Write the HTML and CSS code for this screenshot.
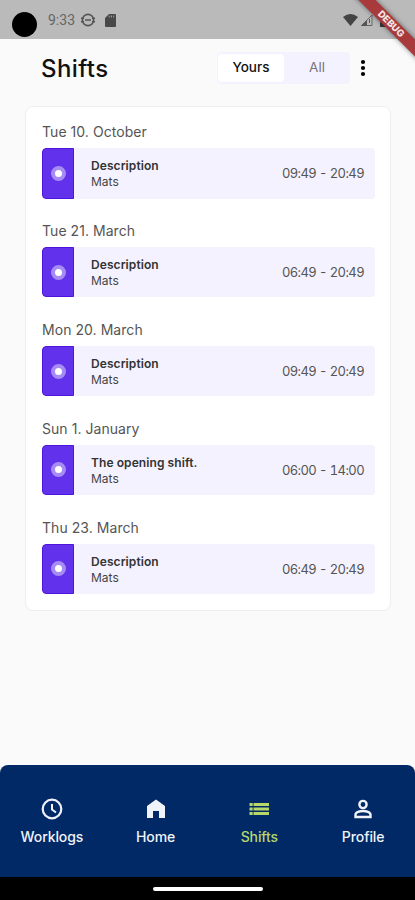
FILE: index.html
```html
<!DOCTYPE html>
<html lang="en">
<head>
<meta charset="utf-8">
<title>Shifts</title>
<link rel="stylesheet" href="styles.css">
</head>
<body>
<div class="phone">
  <div class="status">
    <span class="camera"></span>
    <span class="clock">9:33</span>
    <svg class="face" viewBox="0 0 14 14"><circle cx="7" cy="7" r="5.600" fill="none" stroke="#555" stroke-width="1.600"/><path d="M0 4.500h3v1.500H0zM0 8h3v1.500H0zM11 4.500h3v1.500h-3zM11 8h3v1.500h-3zM4 6.300h6v1.500H4z" fill="#555"/></svg>
    <svg class="sd" viewBox="0 0 11 13"><path d="M4 0h6a1 1 0 0 1 1 1v11a1 1 0 0 1-1 1H1a1 1 0 0 1-1-1V4z" fill="#484848"/><path d="M4.300 1.500v2M6.500 1.500v2M8.700 1.500v2" stroke="#999" stroke-width="1"/></svg>
    <span class="grow"></span>
    <svg class="wifi" viewBox="0 0 15 12"><path d="M0 3Q7.500-3 15 3L7.500 12z" fill="#444"/></svg>
    <svg class="signal" viewBox="0 0 13 12"><path d="M12 1v10.500H1.500z" fill="none" stroke="#666"/><path d="M7 6v6H1z" fill="#555"/><path d="M9.500 5v4" stroke="#555"/></svg>
    <svg class="battery" viewBox="0 0 8 13"><path d="M2.500 0h3v1.500H8V13H0V1.500h2.500z" fill="#3c3c3c"/></svg>
  </div>
  <div class="ribbon">DEBUG</div>

  <header class="header">
    <h1>Shifts</h1>
    <div class="toggle"><span class="on">Yours</span><span class="off">All</span></div>
    <svg class="more" viewBox="0 0 6 18"><circle cx="3" cy="3" r="2.100"/><circle cx="3" cy="9" r="2.100"/><circle cx="3" cy="15" r="2.100"/></svg>
  </header>

  <main class="card">
    <section><h2>Tue 10. October</h2><div class="row"><div class="mark"><i></i></div><div class="info"><b>Description</b><span>Mats</span></div><time>09:49 - 20:49</time></div></section>
    <section><h2>Tue 21. March</h2><div class="row"><div class="mark"><i></i></div><div class="info"><b>Description</b><span>Mats</span></div><time>06:49 - 20:49</time></div></section>
    <section><h2>Mon 20. March</h2><div class="row"><div class="mark"><i></i></div><div class="info"><b>Description</b><span>Mats</span></div><time>09:49 - 20:49</time></div></section>
    <section><h2>Sun 1. January</h2><div class="row"><div class="mark"><i></i></div><div class="info"><b>The opening shift.</b><span>Mats</span></div><time>06:00 - 14:00</time></div></section>
    <section><h2>Thu 23. March</h2><div class="row"><div class="mark"><i></i></div><div class="info"><b>Description</b><span>Mats</span></div><time>06:49 - 20:49</time></div></section>
  </main>

  <nav class="nav">
    <a><svg viewBox="0 0 24 24"><circle cx="12" cy="12" r="9.300" fill="none" stroke="currentColor" stroke-width="2.200"/><path d="M12 7v5.500l4 3" fill="none" stroke="currentColor" stroke-width="2"/></svg><span>Worklogs</span></a>
    <a><svg viewBox="0 0 24 24"><path d="M12 2.500l9 6.500V21h-6v-7H9v7H3V9z" fill="currentColor"/></svg><span>Home</span></a>
    <a class="active"><svg viewBox="0 0 24 24"><path d="M2.500 6h3.200v3H2.500zM6.500 6h15.500v3H6.500zM2.500 10.500h3.200v3H2.500zM6.500 10.500h15.500v3H6.500zM2.500 15h3.200v3H2.500zM6.500 15h15.500v3H6.500z" fill="currentColor"/></svg><span>Shifts</span></a>
    <a><svg viewBox="0 0 24 24"><circle cx="12" cy="7.500" r="3.600" fill="none" stroke="currentColor" stroke-width="2.400"/><path d="M4.500 20v-2.300c0-2.400 4.300-3.700 7.500-3.700s7.500 1.300 7.500 3.700V20z" fill="none" stroke="currentColor" stroke-width="2.400"/></svg><span>Profile</span></a>
  </nav>
  <div class="gesture"><span></span></div>
</div>
</body>
</html>
```
FILE: styles.css
```css
* { box-sizing: border-box; }
body { margin: 0; font-family: Inter, "Liberation Sans", sans-serif; background: #fafafa; }
.phone { position: relative; width: 415px; height: 900px; overflow: hidden; display: flex; flex-direction: column; background: #fafafa; }

.status { flex: none; height: 39px; background: #bababa; display: flex; align-items: center; padding: 1px 27px 0 12px; }
.camera { width: 25px; height: 25px; border-radius: 50%; background: #000; margin-top: 9px; }
.clock { width: 27px; margin-left: 11px; font: 14px Roboto, sans-serif; color: #666; }
.face { width: 14px; height: 14px; margin-left: 6px; }
.sd { width: 11px; height: 13px; margin-left: 10px; }
.grow { flex: 1; }
.wifi { width: 15px; height: 12px; }
.signal { width: 13px; height: 12px; margin-left: 2px; }
.battery { width: 8px; height: 13px; margin-left: 7px; }
.ribbon { position: absolute; left: 341px; top: 18px; width: 100px; height: 12px; line-height: 12px; transform: rotate(45deg); background: #a93a3c; box-shadow: 0 0 5px rgba(0, 0, 0, .5); color: #f5e6e6; text-align: center; font-size: 9.5px; font-weight: 800; }

.header { flex: none; height: 67px; display: flex; align-items: center; padding: 0 49px 9px 41px; }
.header h1 { flex: 1; margin: 0; padding-top: 2px; font-size: 24px; font-weight: 450; line-height: 30px; letter-spacing: .4px; color: #111; }
.toggle { width: 133px; height: 32px; padding: 2px 0 2px 1px; border-radius: 5px; background: #f4f2ff; display: flex; font-size: 13.500px; line-height: 27px; text-align: center; }
.toggle span { flex: 1; }
.toggle .on { background: #fff; border-radius: 4px; font-weight: 500; color: #111; }
.toggle .off { color: #77757e; }
.more { width: 6px; height: 18px; margin-left: 10px; fill: #000; }

.card { flex: none; width: 366px; height: 505px; margin-left: 25px; padding: 15px 15px 0 16px; border: 1px solid #eee; border-radius: 8px; background: #fff; display: flex; flex-direction: column; }
.card section { height: 98.9px; flex: none; }
.card h2 { margin: 0 0 7px; font-size: 14px; line-height: 19px; font-weight: 400; letter-spacing: .05px; color: #555; }
.row { height: 50.500px; border-radius: 4px; overflow: hidden; display: flex; align-items: center; background: #f4f2ff; padding-right: 11px; }
.mark { width: 32px; height: 100%; background: #6231eb; border: 1px solid #5014dc; border-radius: 4px 0 0 4px; display: flex; align-items: center; justify-content: center; }
.mark i { width: 15px; height: 15px; border-radius: 50%; border: 4px solid #a68bf4; background: #fff; }
.info { flex: 1; margin-left: 17px; padding-top: 2px; display: flex; flex-direction: column; font-size: 12px; line-height: 16px; color: #444; }
.info b { font-weight: 600; letter-spacing: .08px; color: #333; }
.row time { font-size: 13px; font-variant-numeric: tabular-nums; letter-spacing: -.6px; color: #555; }

.nav { flex: none; height: 112px; margin-top: auto; border-radius: 8px 8px 0 0; background: #002966; display: flex; padding-top: 32px; }
.nav a { flex: 1; display: flex; flex-direction: column; align-items: center; gap: 6px; color: #f1f3fa; font-size: 14px; line-height: 20px; font-weight: 500; letter-spacing: -.1px; }
.nav svg { width: 24px; height: 24px; }
.nav .active { color: #b8d76b; }
.gesture { flex: none; height: 23px; background: #000; display: flex; justify-content: center; align-items: center; }
.gesture span { width: 110px; height: 4px; border-radius: 2px; background: #fff; }
```
